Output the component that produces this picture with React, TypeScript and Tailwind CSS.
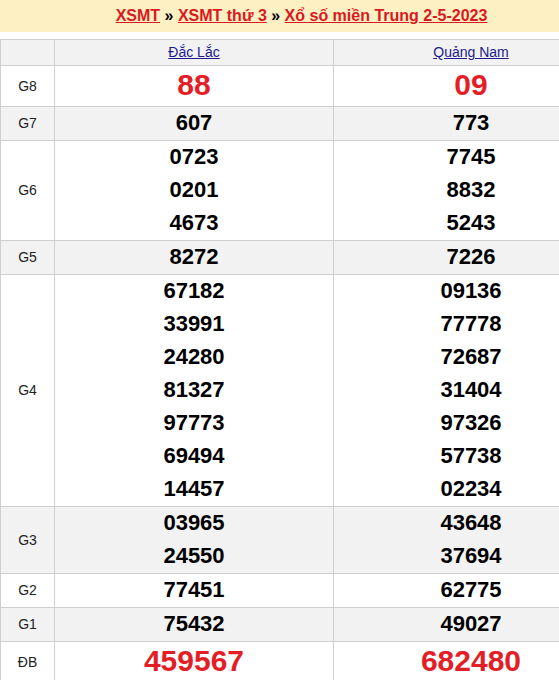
const FONT = { fontFamily: '"Liberation Sans", Arial, sans-serif' };

interface PrizeRow {
  label: string;
  left: string[];
  right: string[];
  shaded?: boolean;
  big?: boolean;
}

const ROWS: PrizeRow[] = [
  { label: 'G8', left: ['88'], right: ['09'], big: true },
  { label: 'G7', left: ['607'], right: ['773'], shaded: true },
  { label: 'G6', left: ['0723', '0201', '4673'], right: ['7745', '8832', '5243'] },
  { label: 'G5', left: ['8272'], right: ['7226'], shaded: true },
  {
    label: 'G4',
    left: ['67182', '33991', '24280', '81327', '97773', '69494', '14457'],
    right: ['09136', '77778', '72687', '31404', '97326', '57738', '02234'],
  },
  { label: 'G3', left: ['03965', '24550'], right: ['43648', '37694'], shaded: true },
  { label: 'G2', left: ['77451'], right: ['62775'] },
  { label: 'G1', left: ['75432'], right: ['49027'], shaded: true },
  { label: 'ĐB', left: ['459567'], right: ['682480'], big: true },
];

function Numbers({ values, big }: { values: string[]; big?: boolean }) {
  if (big) {
    return <div className="h-[40px] text-[30px] font-bold leading-[38px] text-[#e41e26]">{values[0]}</div>;
  }
  return (
    <div>
      {values.map((v) => (
        <div key={v} className="h-[33px] text-[22px] font-bold leading-[32px] text-black">
          {v}
        </div>
      ))}
    </div>
  );
}

export default function App() {
  return (
    <div className="w-[559px] overflow-hidden bg-white" style={FONT}>
      <div className="w-[609px]">
        <div className="h-[32px] w-[603px] bg-[#fdf0c3] text-center text-[16px] font-bold leading-[32px]">
          <a href="#" className="text-[#d9191f] underline">XSMT</a>
          <span className="text-black"> » </span>
          <a href="#" className="text-[#d9191f] underline">XSMT thứ 3</a>
          <span className="text-black"> » </span>
          <a href="#" className="text-[#d9191f] underline">Xổ số miền Trung 2-5-2023</a>
        </div>

        <table className="mt-[7px] w-[609px] border-collapse text-center">
          <thead>
            <tr className="bg-[#f2f2f2]">
              <th className="h-[26px] w-[54px] border border-[#cfcfcf] p-0" />
              <th className="w-[279px] border border-[#cfcfcf] p-0 text-[14px] font-normal">
                <a href="#" className="text-[#1b1b8f] underline">Đắc Lắc</a>
              </th>
              <th className="border border-[#cfcfcf] p-0 text-[14px] font-normal">
                <a href="#" className="text-[#1b1b8f] underline">Quảng Nam</a>
              </th>
            </tr>
          </thead>
          <tbody>
            {ROWS.map((row) => (
              <tr key={row.label} className={row.shaded ? 'bg-[#f2f2f2]' : 'bg-white'}>
                <td className="border border-[#cfcfcf] p-0 text-[14px] text-[#222]">{row.label}</td>
                <td className="border border-[#cfcfcf] p-0">
                  <Numbers values={row.left} big={row.big} />
                </td>
                <td className="border border-[#cfcfcf] p-0">
                  <Numbers values={row.right} big={row.big} />
                </td>
              </tr>
            ))}
          </tbody>
        </table>
      </div>
    </div>
  );
}
